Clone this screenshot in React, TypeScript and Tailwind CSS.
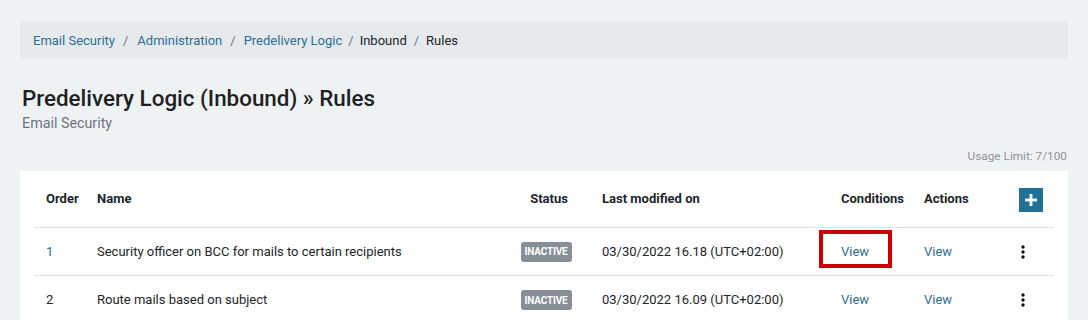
import React from "react";

const font = { fontFamily: "Roboto, 'Liberation Sans', sans-serif" };

function Kebab() {
  return (
    <svg width="4" height="14" viewBox="0 0 4 14" className="block">
      <circle cx="2" cy="2" r="1.7" fill="#111" />
      <circle cx="2" cy="7" r="1.7" fill="#111" />
      <circle cx="2" cy="12" r="1.7" fill="#111" />
    </svg>
  );
}

function Badge() {
  return (
    <span className="inline-flex h-[20px] w-[51px] items-center justify-center rounded-[3px] bg-[#868e96] text-[10px] font-bold tracking-[-0.2px] text-white">
      INACTIVE
    </span>
  );
}

const cols = "grid grid-cols-[51px_417px_88px_239px_83px_83px_59px]";

const rows = [
  { order: "1", name: "Security officer on BCC for mails to certain recipients", date: "03/30/2022 16.18 (UTC+02:00)", highlight: true, orderLink: true },
  { order: "2", name: "Route mails based on subject", date: "03/30/2022 16.09 (UTC+02:00)", highlight: false, orderLink: false },
];

export default function App() {
  return (
    <div style={font} className="min-h-[320px] w-[1088px] overflow-hidden bg-[#eff2f3] px-[20px] pt-[21px] text-[#212529]">
      <div className="flex h-[38px] items-center bg-[#e7eaec] px-[13px] pt-[1px] text-[13px]">
        <a className="text-[#2c6f97]">Email Security</a>
        <span className="pl-[8px] pr-[9px] text-[#6c757d]">/</span>
        <a className="text-[#2c6f97]">Administration</a>
        <span className="px-[8px] text-[#6c757d]">/</span>
        <a className="text-[#2c6f97]">Predelivery Logic</a>
        <span className="px-[6px] text-[#6c757d]">/</span>
        <span className="text-[#212529]">Inbound</span>
        <span className="px-[7px] text-[#6c757d]">/</span>
        <span className="text-[#212529]">Rules</span>
      </div>

      <div className="mt-[26px] pl-[2px]">
        <h1 className="text-[22.4px] font-medium leading-[26px] text-[#1d2125]">Predelivery Logic (Inbound) » Rules</h1>
        <div className="mt-[3px] text-[14.3px] leading-[18px] text-[#6c757d]">Email Security</div>
      </div>

      <div className="mt-[16px] pr-[1px] text-right text-[11.8px] leading-[16px] text-[#8c9399]">Usage Limit: 7/100</div>

      <div className="mt-[7px] bg-white px-[14px]">
        <div className={`${cols} h-[57px] items-center border-b border-[#dee2e6] text-[13px] font-bold text-[#212529]`}>
          <div className="px-[12px]">Order</div>
          <div className="px-[12px]">Name</div>
          <div className="pl-[18px] pr-[12px] text-center">Status</div>
          <div className="px-[12px]">Last modified on</div>
          <div className="px-[12px]">Conditions</div>
          <div className="px-[12px]">Actions</div>
          <div className="pl-[24px] pt-[1px]">
            <button className="flex h-[24px] w-[24px] items-center justify-center bg-[#21709a]">
              <svg width="12" height="12" viewBox="0 0 12 12">
                <rect x="4.6" y="0" width="2.8" height="12" fill="#fff" />
                <rect x="0" y="4.6" width="12" height="2.8" fill="#fff" />
              </svg>
            </button>
          </div>
        </div>
        {rows.map((r, i) => (
          <div key={i} className={`${cols} h-[48px] items-center text-[13px] ${i === 0 ? "border-b border-[#dee2e6]" : ""}`}>
            <div className={`px-[12px] ${r.orderLink ? "text-[#2c6f97]" : "text-[#212529]"}`}>{r.order}</div>
            <div className="px-[12px]">{r.name}</div>
            <div className="flex justify-center px-[12px]"><Badge /></div>
            <div className="px-[12px]">{r.date}</div>
            <div className="relative flex items-center self-stretch px-[12px] text-[#2c6f97]">
              View
              {r.highlight && (
                <div className="absolute left-[-10px] top-[2px] h-[38px] w-[73px] border-[4px] border-[#cc0000]" />
              )}
            </div>
            <div className="px-[12px] text-[#2c6f97]">View</div>
            <div className="pl-[26px]"><Kebab /></div>
          </div>
        ))}
      </div>
    </div>
  );
}
